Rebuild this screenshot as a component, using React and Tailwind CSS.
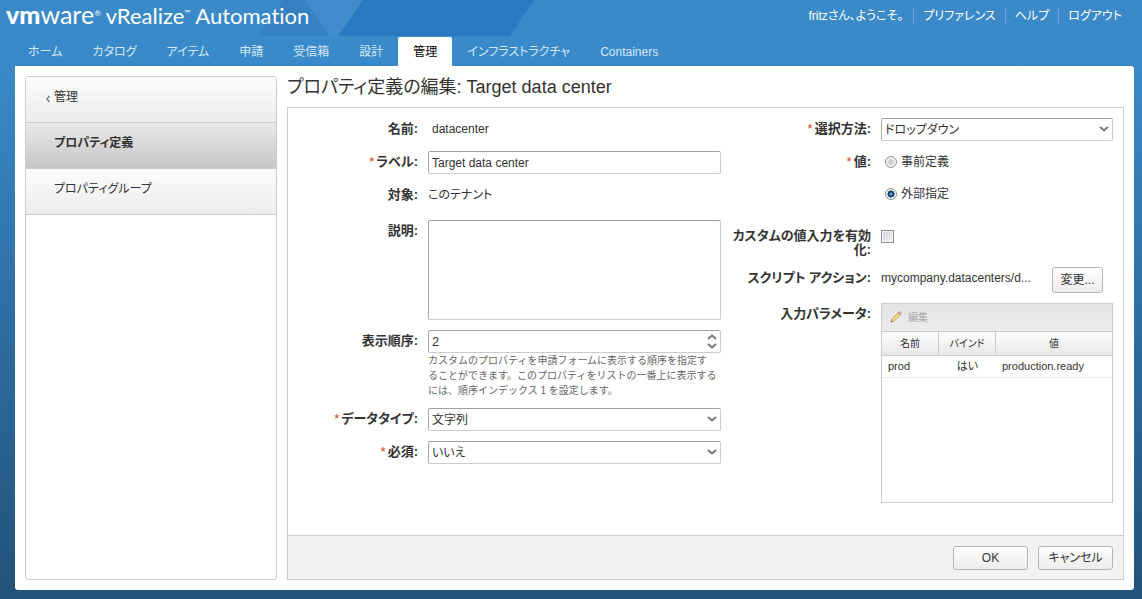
import { useState } from "react";
import clsx from "clsx";

const TABS = [
  { label: "ホーム" },
  { label: "カタログ" },
  { label: "アイテム" },
  { label: "申請" },
  { label: "受信箱" },
  { label: "設計" },
  { label: "管理", active: true },
  { label: "インフラストラクチャ" },
  { label: "Containers" },
];

const PARAMETERS = [{ name: "prod", bind: "はい", value: "production.ready" }];

const fieldClass =
  "block w-full rounded-xs border border-[#ccc] border-t-[#a0a0a0] border-l-[#a8a8a8] bg-white px-[3px] text-xs text-[#333] outline-none";

function Chevron({ up }) {
  return (
    <svg width="10" height="6" viewBox="0 0 10 6" fill="none" aria-hidden="true">
      <path d={up ? "M1 5 L5 1.5 L9 5" : "M1 1 L5 4.5 L9 1"} stroke="#777" strokeWidth="2" />
    </svg>
  );
}

function FieldLabel({ htmlFor, required, children }) {
  return (
    <label htmlFor={htmlFor} className="pt-1 text-right text-[13px] leading-[14px] font-bold">
      {required && <span className="mr-0.5 font-normal text-[#d9400b]">*</span>}
      {children}:
    </label>
  );
}

function LeftRow({ className, children }) {
  return <div className={clsx("grid grid-cols-[130px_1fr] gap-2.5", className)}>{children}</div>;
}

function RightRow({ className, children }) {
  return <div className={clsx("grid grid-cols-[140px_1fr] gap-2.5", className)}>{children}</div>;
}

function Select({ id, options }) {
  return (
    <div className="relative">
      <select id={id} className={clsx(fieldClass, "h-[23px] appearance-none")}>
        {options.map((option) => (
          <option key={option}>{option}</option>
        ))}
      </select>
      <span className="pointer-events-none absolute top-2 right-1">
        <Chevron />
      </span>
    </div>
  );
}

function Radio({ value, checked, onChange, children }) {
  return (
    <label className="flex h-[22px] items-center gap-1 pl-1">
      <input
        type="radio"
        name="valueSource"
        value={value}
        checked={checked}
        onChange={() => onChange(value)}
        className="size-3 appearance-none rounded-full border border-[#8e8f8f] bg-[radial-gradient(circle,#c9ccd0_0_25%,#f4f4f4_60%)] checked:bg-[radial-gradient(circle_at_50%_50%,#4db5e6_0_14%,#143d66_28%_46%,#f4f4f4_54%)]"
      />
      {children}
    </label>
  );
}

function Button({ className, children }) {
  return (
    <button
      type="button"
      className={clsx(
        "rounded-[3px] border border-[#b5b5b5] bg-linear-to-b from-white to-[#ececec] text-[#333]",
        className
      )}
    >
      {children}
    </button>
  );
}

function Header() {
  return (
    <header className="relative">
      <svg className="absolute top-0 left-0" width="540" height="36" aria-hidden="true">
        <polygon points="258,36 283,0 305,0 330,36" fill="#3581c2" />
        <polygon points="305,0 362,0 338,36 330,36" fill="#418dcb" />
        <polygon points="363,0 534,0 510,36 338,36" fill="#2a7ac2" />
      </svg>
      <div className="relative flex h-[37px] items-start justify-between pl-1.5 text-white">
        <div className="flex items-baseline font-[family-name:Lato] text-[22px] leading-7 whitespace-nowrap [font-feature-settings:normal] [font-variant-ligatures:none]">
          <span className="text-[25px] leading-7 font-black">vm</span>
          <span className="text-[25px] leading-7">ware</span>
          <sup className="-top-2 text-[8px]">®</sup>
          <span className="ml-[5px]">vRealize</span>
          <sup className="-top-2 text-[8px]">™</sup>
          <span className="ml-[5px]">Automation</span>
        </div>
        <div className="flex items-center pt-[9px] pr-[11px] text-xs leading-[14px]">
          <span className="px-2.5">fritzさん、ようこそ。</span>
          <a href="#preferences" className="border-l border-[#6ba6d6] px-[9px]">
            プリファレンス
          </a>
          <a href="#help" className="border-l border-[#6ba6d6] px-[9px]">
            ヘルプ
          </a>
          <a href="#logout" className="border-l border-[#6ba6d6] px-[9px]">
            ログアウト
          </a>
        </div>
      </div>
      <nav className="relative flex h-[29px] pl-[13px]">
        {TABS.map((tab) => (
          <a
            key={tab.label}
            href="#tab"
            className={clsx(
              "flex items-center rounded-t-xs px-[15px] pt-px whitespace-nowrap",
              tab.active ? "bg-white text-black" : "text-[#d5e8f7]"
            )}
          >
            {tab.label}
          </a>
        ))}
      </nav>
    </header>
  );
}

function Sidebar() {
  return (
    <aside className="w-[252px] shrink-0 rounded-[3px] border border-[#ccc]">
      <a
        href="#admin"
        className="flex h-[46px] items-start border-b border-[#ccc] bg-linear-to-b from-[#fcfcfc] to-[#ececec] pt-3 pl-5"
      >
        <svg className="mt-1.5 mr-1" width="4" height="8" viewBox="0 0 4 8" fill="none" aria-hidden="true">
          <path d="M3.5 1 L1 4 L3.5 7" stroke="#777" strokeWidth="1.4" />
        </svg>
        管理
      </a>
      <a
        href="#definitions"
        className="block h-[46px] border-b border-[#ccc] bg-linear-to-b from-[#e9e9e9] to-[#c6c6c6] pt-3 pl-7 font-bold"
      >
        プロパティ定義
      </a>
      <a
        href="#groups"
        className="block h-[46px] border-b border-[#ccc] bg-linear-to-b from-[#fcfcfc] to-[#ececec] pt-3 pl-7"
      >
        プロパティグループ
      </a>
    </aside>
  );
}

function ParameterTable() {
  return (
    <div className="h-[200px] border border-[#ccc]">
      <div className="flex h-7 items-center border-b border-[#ccc] bg-linear-to-b from-[#e4e4e4] to-[#ececec] pl-2">
        <button type="button" disabled className="flex items-center gap-1.5 text-[10px] text-[#aaa]">
          <svg width="12" height="12" viewBox="0 0 12 12" aria-hidden="true">
            <path d="M1 11 L2 7.8 L8 1.8 L10.2 4 L4.2 10 Z" fill="#f2d98a" stroke="#b79a58" strokeWidth="0.8" />
            <path d="M8 1.8 L9 0.8 Q10 0.4 10.8 1.2 Q11.6 2 11.2 3 L10.2 4 Z" fill="#e3a9a0" stroke="#b98d86" strokeWidth="0.6" />
            <path d="M1 11 L1.5 9.4 L2.6 10.5 Z" fill="#555" />
          </svg>
          編集
        </button>
      </div>
      <table className="w-full table-fixed border-separate border-spacing-0">
        <thead>
          <tr className="h-6 bg-linear-to-b from-white to-[#e6e6e6] text-[10px]">
            <th className="w-[57px] border-r border-b border-[#ccc] p-0 font-normal">名前</th>
            <th className="w-[57px] border-r border-b border-[#ccc] p-0 font-normal">バインド</th>
            <th className="border-b border-[#ccc] p-0 font-normal">値</th>
          </tr>
        </thead>
        <tbody>
          {PARAMETERS.map((param) => (
            <tr key={param.name} className="h-[22px] text-[11px]">
              <td className="border-b border-[#ededed] p-0 pl-1.5">{param.name}</td>
              <td className="border-b border-[#ededed] p-0 text-center">{param.bind}</td>
              <td className="border-b border-[#ededed] p-0 pl-1.5">{param.value}</td>
            </tr>
          ))}
        </tbody>
      </table>
    </div>
  );
}

export default function App() {
  const [label, setLabel] = useState("Target data center");
  const [order, setOrder] = useState(2);
  const [source, setSource] = useState("external");

  return (
    <div className="flex min-h-screen flex-col bg-linear-to-b from-[#3a8ac9] from-10% to-[#225279] pb-[9px] font-['Liberation_Sans','Noto_Sans_CJK_JP',sans-serif] text-xs text-[#333] [font-feature-settings:'palt']">
      <Header />
      <div className="mr-2 ml-[15px] flex flex-1 gap-2.5 rounded-b-[3px] rounded-tr-[3px] bg-white p-2.5">
        <Sidebar />
        <main className="flex min-w-0 flex-1 flex-col">
          <h1 className="h-[31px] text-lg leading-[22px]">プロパティ定義の編集: Target data center</h1>
          <form className="flex flex-1 flex-col border border-[#ccc]">
            <div className="grid flex-1 grid-cols-[433fr_382fr] gap-2.5 pt-2.5 pr-2.5">
              <div className="flex flex-col gap-2.5">
                <LeftRow>
                  <FieldLabel htmlFor="name">名前</FieldLabel>
                  <output id="name" className="h-[23px] pl-1 leading-[23px]">
                    datacenter
                  </output>
                </LeftRow>
                <LeftRow>
                  <FieldLabel htmlFor="label" required>
                    ラベル
                  </FieldLabel>
                  <input
                    id="label"
                    type="text"
                    value={label}
                    onChange={(e) => setLabel(e.target.value)}
                    className={clsx(fieldClass, "h-[23px]")}
                  />
                </LeftRow>
                <LeftRow className="pb-[3px]">
                  <FieldLabel htmlFor="target">対象</FieldLabel>
                  <output id="target" className="h-[23px] leading-[23px]">
                    このテナント
                  </output>
                </LeftRow>
                <LeftRow>
                  <FieldLabel htmlFor="description">説明</FieldLabel>
                  <textarea id="description" className={clsx(fieldClass, "h-[100px] resize-none")} />
                </LeftRow>
                <LeftRow>
                  <FieldLabel htmlFor="order">表示順序</FieldLabel>
                  <div>
                    <div className="relative">
                      <input
                        id="order"
                        type="number"
                        value={order}
                        onChange={(e) => setOrder(Number(e.target.value))}
                        className={clsx(
                          fieldClass,
                          "h-[23px] appearance-none text-[13px] [&::-webkit-inner-spin-button]:appearance-none"
                        )}
                      />
                      <div className="absolute top-1 right-1 flex flex-col gap-[3px]">
                        <button type="button" aria-label="増やす" onClick={() => setOrder(order + 1)}>
                          <Chevron up />
                        </button>
                        <button type="button" aria-label="減らす" onClick={() => setOrder(order - 1)}>
                          <Chevron />
                        </button>
                      </div>
                    </div>
                    <p className="text-[10px] leading-[15px] whitespace-nowrap text-[#666] [font-feature-settings:normal]">
                      カスタムのプロパティを申請フォームに表示する順序を指定す
                      <br />
                      ることができます。このプロパティをリストの一番上に表示する
                      <br />
                      には、順序インデックス 1 を設定します。
                    </p>
                  </div>
                </LeftRow>
                <LeftRow>
                  <FieldLabel htmlFor="dataType" required>
                    データタイプ
                  </FieldLabel>
                  <Select id="dataType" options={["文字列"]} />
                </LeftRow>
                <LeftRow>
                  <FieldLabel htmlFor="mandatory" required>
                    必須
                  </FieldLabel>
                  <Select id="mandatory" options={["いいえ", "はい"]} />
                </LeftRow>
              </div>

              <div className="flex flex-col gap-2.5">
                <RightRow>
                  <FieldLabel htmlFor="displayAdvice" required>
                    選択方法
                  </FieldLabel>
                  <Select id="displayAdvice" options={["ドロップダウン"]} />
                </RightRow>
                <RightRow>
                  <FieldLabel required>値</FieldLabel>
                  <div className="flex flex-col gap-2.5">
                    <Radio value="static" checked={source === "static"} onChange={setSource}>
                      事前定義
                    </Radio>
                    <Radio value="external" checked={source === "external"} onChange={setSource}>
                      外部指定
                    </Radio>
                  </div>
                </RightRow>
                <RightRow className="pt-2.5">
                  <FieldLabel htmlFor="customInput">カスタムの値入力を有効化</FieldLabel>
                  <input
                    id="customInput"
                    type="checkbox"
                    className="mt-[5px] size-[13px] appearance-none border border-[#8e8f8f] bg-linear-to-br from-[#cfd3d8] to-[#f6f6f6] shadow-[inset_0_0_0_1px_#f4f4f4] checked:from-[#143d66] checked:to-[#4db5e6]"
                  />
                </RightRow>
                <RightRow>
                  <FieldLabel htmlFor="scriptAction">スクリプト アクション</FieldLabel>
                  <div className="flex justify-between pr-2.5">
                    <output id="scriptAction" className="leading-[23px]">
                      mycompany.datacenters/d...
                    </output>
                    <Button className="h-[26px] w-[51px]">変更...</Button>
                  </div>
                </RightRow>
                <RightRow>
                  <FieldLabel>入力パラメータ</FieldLabel>
                  <ParameterTable />
                </RightRow>
              </div>
            </div>
            <div className="flex h-11 items-center justify-end gap-2.5 border-t border-[#ccc] bg-[#f2f2f2] px-2.5">
              <Button className="h-6 w-[75px]">OK</Button>
              <Button className="h-6 w-[75px]">キャンセル</Button>
            </div>
          </form>
        </main>
      </div>
    </div>
  );
}
